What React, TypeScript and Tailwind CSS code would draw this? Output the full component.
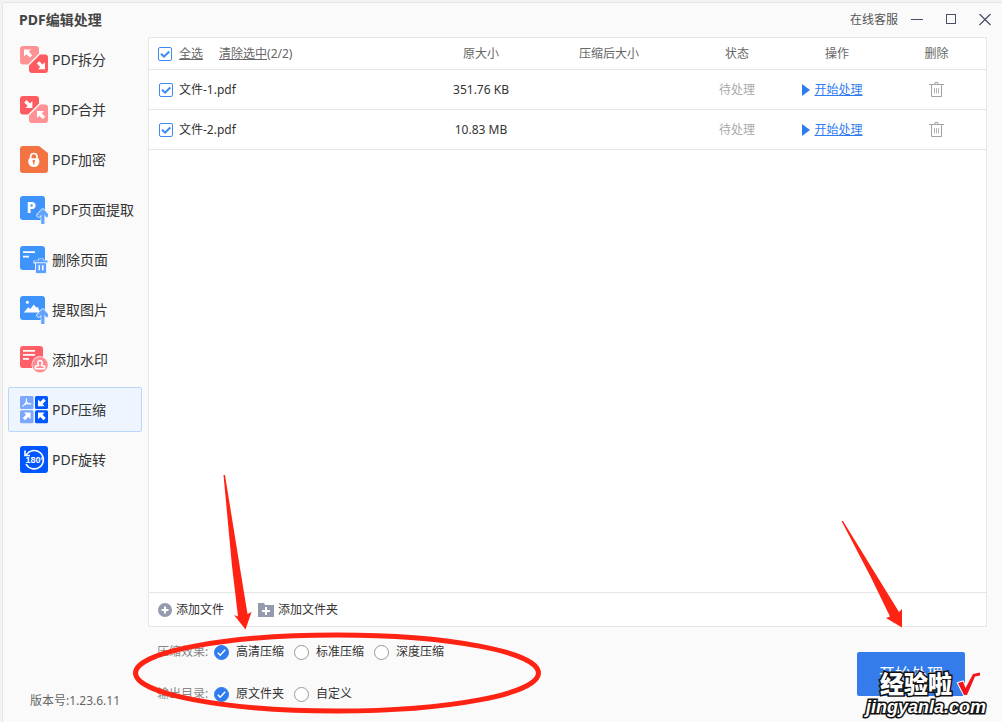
import { useState } from 'react';
import type { ReactNode } from 'react';

const ARROW_UP_LEFT = 'M4 3.5h7L8.8 5.8l3.4 3.4-2.4 2.4-3.4-3.4L4 10.5z';
const CORNER_TILE = 'M3 0h13a3 3 0 0 1 3 3v4.5L8 18.5H3a3 3 0 0 1-3-3V3a3 3 0 0 1 3-3z';
const ARROW_UP = 'M22.8 15v12M18.6 19.4l4.2-4.6 4.2 4.6';

function SidebarIcon({ children }: { children: ReactNode }) {
  return (
    <svg width="28" height="28" viewBox="0 0 28 28" className="shrink-0" aria-hidden="true">
      {children}
    </svg>
  );
}

function SplitIcon() {
  return (
    <SidebarIcon>
      <path d={CORNER_TILE} fill="#ff9295" />
      <path d={CORNER_TILE} fill="#ff5a60" transform="rotate(180 14 13.5)" />
      <path d={ARROW_UP_LEFT} fill="#fff" />
      <path d={ARROW_UP_LEFT} fill="#fff" transform="rotate(180 14.5 13.4)" />
    </SidebarIcon>
  );
}

function MergeIcon() {
  return (
    <SidebarIcon>
      <path d={CORNER_TILE} fill="#ff5a60" />
      <path d={CORNER_TILE} fill="#ff9295" transform="rotate(180 14 13.5)" />
      <path d={ARROW_UP_LEFT} fill="#fff" transform="rotate(180 8.2 7.8)" />
      <path d={ARROW_UP_LEFT} fill="#fff" transform="translate(13 11.5)" />
    </SidebarIcon>
  );
}

function LockIcon() {
  return (
    <SidebarIcon>
      <path d="M3 0h16l9 7v17a3 3 0 0 1-3 3H3a3 3 0 0 1-3-3V3a3 3 0 0 1 3-3z" fill="#f37343" />
      <path d="M10.6 13v-2.3a3.2 3.2 0 0 1 6.4 0V13" fill="none" stroke="#fff" strokeWidth="1.7" />
      <path d="M9.2 12.2h9.2a6 6 0 0 1 1 3.3 5.6 5.6 0 0 1-11.2 0 6 6 0 0 1 1-3.3z" fill="#fff" />
      <circle cx="13.8" cy="15" r="1.3" fill="#f37343" />
      <path d="M13.2 15.5h1.2v3h-1.2z" fill="#f37343" />
    </SidebarIcon>
  );
}

function UpArrowMark() {
  return (
    <g fill="none" strokeLinecap="round" strokeLinejoin="round">
      <path d={ARROW_UP} stroke="#d9e9ff" strokeWidth="4.6" />
      <path d={ARROW_UP} stroke="#5fa3ff" strokeWidth="3" />
    </g>
  );
}

function ExtractPageIcon() {
  return (
    <SidebarIcon>
      <rect width="25" height="24" rx="3" fill="#3e94fb" />
      <text x="6.4" y="16.8" fontSize="15" fontWeight="800" fontFamily="Noto Sans, sans-serif" fill="#fff">
        P
      </text>
      <UpArrowMark />
    </SidebarIcon>
  );
}

function DeletePageIcon() {
  return (
    <SidebarIcon>
      <rect width="25" height="24" rx="3" fill="#3e94fb" />
      <path d="M3 6.2h12M3 10.6h6" stroke="#fff" strokeWidth="1.8" />
      <path d="M13.5 14.5h4l1-2h5l1 2H28v3h-1V28H15V17.5h-1.5z" fill="#e4f0ff" />
      <path d="M14.5 15.4h13M18.8 14h4.4" stroke="#5b9fff" strokeWidth="1.8" />
      <path d="M16 17.2h10V26a1 1 0 0 1-1 1h-8a1 1 0 0 1-1-1z" fill="#5b9fff" />
      <path d="M19.3 19.3v5M22.8 19.3v5" stroke="#fff" strokeWidth="1.5" />
    </SidebarIcon>
  );
}

function ExtractImageIcon() {
  return (
    <SidebarIcon>
      <rect width="25" height="24" rx="3" fill="#3e94fb" />
      <circle cx="7.4" cy="6.2" r="1.5" fill="#fff" />
      <path d="M3.8 16.6l4.4-5.4 2.2 1.8 3.4-4.6 2.6 3.4 1.6-.8 2 5.6z" fill="#fff" />
      <UpArrowMark />
    </SidebarIcon>
  );
}

function WatermarkIcon() {
  return (
    <SidebarIcon>
      <rect width="23" height="22" rx="3" fill="#ff5f66" />
      <path d="M3 4.8h12M3 8.8h12M3 12.8h6" stroke="#fff" strokeWidth="1.7" />
      <circle cx="20" cy="18.7" r="8.5" fill="#fff" />
      <circle cx="20" cy="18.7" r="7.8" fill="#ff8b90" />
      <path
        d="M18.4 19.4c-3-6.6 6.2-6.6 3.2 0l3 .8v2.6h-9.200v-2.600z"
        fill="none"
        stroke="#fff"
        strokeWidth="1.6"
      />
    </SidebarIcon>
  );
}

function CompressIcon() {
  return (
    <SidebarIcon>
      <rect width="13.5" height="13" rx="1.5" fill="#7ba7fd" />
      <rect x="15" width="13" height="13" rx="1.5" fill="#0057ff" />
      <rect y="14.2" width="13.5" height="13" rx="1.5" fill="#7ba7fd" />
      <rect x="15" y="14.2" width="13" height="13" rx="1.5" fill="#0057ff" />
      <path
        d="M6.3 2.4c.6 3-1.2 6.200-3.800 8M6.300 5.500c.8 2 2.600 2.800 5 2.200M4.500 8.600c2-.8 3.600-1.200 5-1"
        fill="none"
        stroke="#fff"
        strokeWidth="1.1"
      />
      <path d={ARROW_UP_LEFT} fill="#fff" transform="matrix(.95 0 0 -.95 14.2 13.5)" />
      <path d={ARROW_UP_LEFT} fill="#fff" transform="matrix(-.95 0 0 .95 14.4 13.2)" />
      <path d={ARROW_UP_LEFT} fill="#fff" transform="matrix(.95 0 0 .95 14.2 13.2)" />
    </SidebarIcon>
  );
}

function RotateIcon() {
  return (
    <SidebarIcon>
      <rect width="28" height="27" rx="3" fill="#0057ff" />
      <path d="M6 9.4a9.200 9.200 0 1 1 0 8.600" fill="none" stroke="#fff" strokeWidth="1.6" />
      <path d="M4.200 4.500h1.600v4.200h4.200v1.600H4.200z" fill="#fff" />
      <text x="5.6" y="17.4" fontSize="9" fontWeight="700" fontFamily="Liberation Sans, sans-serif" fill="#fff">
        180°
      </text>
    </SidebarIcon>
  );
}

const menu = [
  { label: 'PDF拆分', icon: <SplitIcon /> },
  { label: 'PDF合并', icon: <MergeIcon /> },
  { label: 'PDF加密', icon: <LockIcon /> },
  { label: 'PDF页面提取', icon: <ExtractPageIcon /> },
  { label: '删除页面', icon: <DeletePageIcon /> },
  { label: '提取图片', icon: <ExtractImageIcon /> },
  { label: '添加水印', icon: <WatermarkIcon /> },
  { label: 'PDF压缩', icon: <CompressIcon /> },
  { label: 'PDF旋转', icon: <RotateIcon /> },
];

const files = [
  { name: '文件-1.pdf', size: '351.76 KB' },
  { name: '文件-2.pdf', size: '10.83 MB' },
];

function Sidebar() {
  const [active, setActive] = useState('PDF压缩');

  return (
    <aside className="flex w-[145px] shrink-0 flex-col">
      <h1 className="flex h-[34px] items-center pl-4 text-sm font-bold text-[#444444]">PDF编辑处理</h1>
      <nav className="flex flex-col gap-[5px] pr-1.5 pl-[5px]">
        {menu.map((item) => (
          <button
            key={item.label}
            type="button"
            onClick={() => setActive(item.label)}
            className={
              item.label === active
                ? 'flex h-[45px] items-center gap-1 rounded-xs border border-[#b9d7fb] bg-[#eef5ff] pl-[11px] text-sm whitespace-nowrap text-[#333333]'
                : 'flex h-[45px] items-center gap-1 rounded-xs border border-transparent pl-[11px] text-sm whitespace-nowrap text-[#333333]'
            }
          >
            {item.icon}
            {item.label}
          </button>
        ))}
      </nav>
      <p className="mt-auto pb-[13px] pl-[27px] text-xs text-[#666666]">版本号:1.23.6.11</p>
    </aside>
  );
}

function TitleBar() {
  return (
    <header className="flex h-[34px] shrink-0 items-center justify-end gap-[22px] pr-[11px] text-[#4a5068]">
      <div className="flex items-center gap-[13px]">
        <a href="#service" className="text-xs text-[#555555]">在线客服</a>
        <button type="button" aria-label="最小化">
          <svg width="12" height="12" viewBox="0 0 12 12" stroke="currentColor">
            <path d="M0 5.5h12" />
          </svg>
        </button>
      </div>
      <button type="button" aria-label="最大化">
        <svg width="12" height="12" viewBox="0 0 12 12" fill="none" stroke="currentColor">
          <rect x="1.5" y=".5" width="9" height="9" />
        </svg>
      </button>
      <button type="button" aria-label="关闭">
        <svg width="12" height="12" viewBox="0 0 12 12" stroke="currentColor" strokeWidth="1.3">
          <path d="M.5 0l11 11M11.5 0l-11 11" />
        </svg>
      </button>
    </header>
  );
}

function Checkbox({ id, checked, onChange }: { id: string; checked: boolean; onChange: () => void }) {
  return (
    <span className="grid size-[14px] shrink-0">
      <input
        id={id}
        type="checkbox"
        checked={checked}
        onChange={onChange}
        className="peer col-start-1 row-start-1 size-[14px] appearance-none rounded-xs border border-[#3d8af5] bg-white"
      />
      <svg
        viewBox="0 0 14 14"
        className="pointer-events-none col-start-1 row-start-1 size-[14px] opacity-0 peer-checked:opacity-100"
        fill="none"
        stroke="#3d8af5"
        strokeWidth="2"
      >
        <path d="M3 6.7l3 3 5.3-5.2" />
      </svg>
    </span>
  );
}

function TrashIcon() {
  return (
    <svg width="15" height="15" viewBox="0 0 15 15" fill="none" stroke="#a3a3a3">
      <path d="M0 2.5h15M6 .5h3v2M6 2.5v-2M2.5 2.5v12h10v-12" />
      <path d="M5.5 6v5.500M7.5 6v5.500M9.5 6v5.500" stroke="#b5b5b5" />
    </svg>
  );
}

function FileTable() {
  const [selected, setSelected] = useState(files.map((file) => file.name));
  const all = selected.length === files.length;

  const toggle = (name: string) =>
    setSelected(selected.includes(name) ? selected.filter((n) => n !== name) : [...selected, name]);

  return (
    <table className="w-full table-fixed border-separate border-spacing-0 text-center text-xs text-[#333333] [&_td]:border-b [&_td]:border-[#e6e6e6] [&_td]:p-0 [&_th]:border-b [&_th]:border-[#e6e6e6] [&_th]:p-0 [&_th]:font-normal">
      <thead>
        <tr className="h-8 text-[#666666]">
          <th>
            <div className="flex items-center pl-[9px]">
              <Checkbox
                id="all"
                checked={all}
                onChange={() => setSelected(all ? [] : files.map((file) => file.name))}
              />
              <label htmlFor="all" className="ml-[7px] underline">全选</label>
              <button type="button" onClick={() => setSelected([])} className="ml-4 underline">
                清除选中
              </button>
              <span>({selected.length}/{files.length})</span>
            </div>
          </th>
          <th className="w-[100px]">原大小</th>
          <th className="w-[156px]">压缩后大小</th>
          <th className="w-[100px]">状态</th>
          <th className="w-[100px]">操作</th>
          <th className="w-[99px]">删除</th>
        </tr>
      </thead>
      <tbody>
        {files.map((file) => (
          <tr key={file.name} className="h-10">
            <td>
              <div className="flex items-center gap-1.5 pl-2.5">
                <Checkbox id={file.name} checked={selected.includes(file.name)} onChange={() => toggle(file.name)} />
                <label htmlFor={file.name}>{file.name}</label>
              </div>
            </td>
            <td>{file.size}</td>
            <td></td>
            <td className="text-[#aaaaaa]">待处理</td>
            <td>
              <div className="flex items-center justify-center gap-1 pr-2.5">
                <svg width="9" height="12" viewBox="0 0 9 12" fill="#2f7cf0">
                  <path d="M1 0l8 6-8 6z" />
                </svg>
                <a href="#start" className="text-[#2f7cf0] underline">开始处理</a>
              </div>
            </td>
            <td>
              <button type="button" aria-label={`删除 ${file.name}`} className="block w-full">
                <span className="flex justify-center">
                  <TrashIcon />
                </span>
              </button>
            </td>
          </tr>
        ))}
      </tbody>
    </table>
  );
}

function RadioRow({ name, title, options }: { name: string; title: string; options: string[] }) {
  return (
    <div role="radiogroup" aria-labelledby={name} className="flex h-6 items-center gap-2.5 text-xs text-[#333333]">
      <span id={name} className="w-[47px] whitespace-nowrap text-[#888888]">{title}</span>
      {options.map((option, i) => (
        <label key={option} className="flex items-center gap-[7px]">
          <span className="grid size-[15px]">
            <input
              type="radio"
              name={name}
              defaultChecked={i === 0}
              className="peer col-start-1 row-start-1 size-[15px] appearance-none rounded-full border border-[#999999] bg-white checked:border-[#2f7cf0] checked:bg-[#2f7cf0]"
            />
            <svg
              viewBox="0 0 15 15"
              className="pointer-events-none col-start-1 row-start-1 size-[15px] opacity-0 peer-checked:opacity-100"
              fill="none"
              stroke="#fff"
              strokeWidth="1.5"
            >
              <path d="M3.8 7.8l2.4 2.4 5-5.4" />
            </svg>
          </span>
          {option}
        </label>
      ))}
    </div>
  );
}

function Annotations() {
  return (
    <div className="pointer-events-none">
      <svg className="absolute bottom-[92px] left-[222px]" width="32" height="156" viewBox="0 0 32 156" fill="#ff2314">
        <path d="M1.5 1H3l15 93 7.500 46 4-2-6 17.500L12 141l4 1.500L10 92z" />
      </svg>
      <svg className="absolute bottom-2 left-[133px]" width="408" height="82" viewBox="0 0 408 82" fill="none">
        <ellipse cx="204" cy="41" rx="201.5" ry="38" stroke="#ff2314" strokeWidth="5" />
      </svg>
      <svg className="absolute right-[100px] bottom-[93px]" width="62" height="109" viewBox="0 0 62 109" fill="#ff2314">
        <path d="M1.5 1h1.500L59 92l3-3v18.500L46 98l4-1.500-20-41z" />
      </svg>
      <div className="absolute right-4 bottom-[5px] flex flex-col items-end font-['Liberation_Sans','Noto_Sans_CJK_SC',sans-serif] whitespace-nowrap text-white [paint-order:stroke_fill] [-webkit-text-stroke:3px_#111111]">
        <div className="flex items-end gap-1 pr-1">
          <span className="text-2xl leading-6 font-black">经验啦</span>
          <svg width="26" height="26" viewBox="0 0 26 26">
            <path
              d="M2 12l5-1.500L9.500 17 17 3l7-1.500V4.500l-5 1L11 24H8z"
              fill="#f4141c"
              stroke="#fff"
              strokeWidth="2"
              className="[paint-order:stroke_fill]"
            />
          </svg>
        </div>
        <span className="text-lg leading-5 font-bold italic">jingyanla.com</span>
      </div>
    </div>
  );
}

export default function App() {
  return (
    <div className="relative flex min-h-screen bg-[#f3f3f3] pt-0.5 pl-0.5 font-['Noto_Sans','Noto_Sans_CJK_SC',sans-serif]">
      <div className="flex flex-1 border-t border-l border-[#e6e6e6] bg-[#fafafa]">
        <Sidebar />
        <main className="flex min-w-0 flex-1 flex-col">
          <TitleBar />
          <section className="mr-[15px] flex flex-1 flex-col border border-[#e6e6e6] bg-white">
            <FileTable />
            <div className="mt-auto flex h-[34px] items-center gap-[34px] border-t border-[#e6e6e6] pl-[9px] text-xs text-[#333333]">
              <button type="button" className="flex items-center gap-1">
                <svg width="14" height="14" viewBox="0 0 14 14">
                  <circle cx="7" cy="7" r="7" fill="#959bae" />
                  <path d="M7 3.5v7M3.5 7h7" stroke="#fff" strokeWidth="2" />
                </svg>
                添加文件
              </button>
              <button type="button" className="flex items-center gap-1">
                <svg width="16" height="14" viewBox="0 0 16 14">
                  <path d="M0 0h6l1 2h9v12H0z" fill="#959bae" />
                  <path d="M8 4v8M4 8h8" stroke="#fff" strokeWidth="2" />
                </svg>
                添加文件夹
              </button>
            </div>
          </section>
          <footer className="flex items-start justify-between pt-[13px] pr-[37px] pb-4 pl-[9px]">
            <div className="flex flex-col gap-[18px]">
              <RadioRow name="quality" title="压缩效果:" options={['高清压缩', '标准压缩', '深度压缩']} />
              <RadioRow name="output" title="输出目录:" options={['原文件夹', '自定义']} />
            </div>
            <button type="button" className="mt-3 h-11 w-[108px] rounded-xs bg-[#347cec] text-base text-white">
              开始处理
            </button>
          </footer>
        </main>
      </div>
      <Annotations />
    </div>
  );
}
